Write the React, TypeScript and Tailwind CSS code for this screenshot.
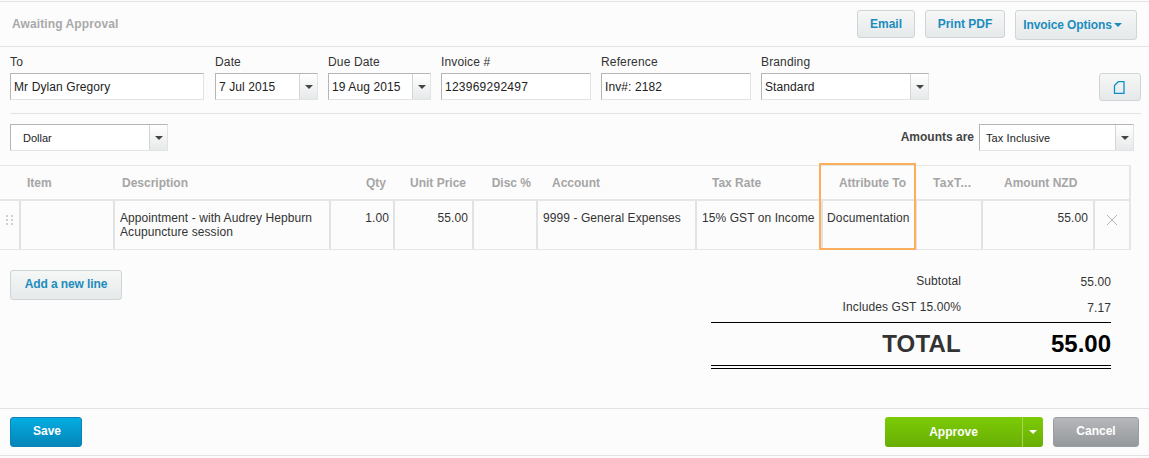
import React from "react";

const FONT = "font-['Liberation_Sans',Arial,sans-serif]";

function Caret({ color = "#444", w = 8, h = 4 }: { color?: string; w?: number; h?: number }) {
  return (
    <svg width={w} height={h} viewBox="0 0 8 4" className="block">
      <path d="M0 0H8L4 4Z" fill={color} />
    </svg>
  );
}

const labelCls = "h-[20px] text-[12px] leading-[18px] text-[#333] tracking-[0.15px]";

function Field({
  label,
  value,
  className,
  track = "tracking-[0.1px]",
}: {
  label: string;
  value: string;
  className: string;
  track?: string;
}) {
  return (
    <div className={"flex flex-col " + className}>
      <div className={labelCls}>{label}</div>
      <div className={"h-[27px] border border-[#e3e3e3] border-t-[#b5b5b5] border-l-[#b5b5b5] bg-white pl-[3px] text-[12px] leading-[26px] text-[#222] whitespace-nowrap " + track}>
        {value}
      </div>
    </div>
  );
}

function Select({
  label,
  value,
  className,
  text = "text-[12px] tracking-[0.1px]",
  pad = "pl-[3px]",
}: {
  label?: string;
  value: string;
  className: string;
  text?: string;
  pad?: string;
}) {
  const box = (
    <div className={"h-[27px] flex border border-[#e3e3e3] border-t-[#b5b5b5] border-l-[#b5b5b5] bg-white " + (label ? "" : className)}>
      <div className={"flex-1 leading-[26px] text-[#222] whitespace-nowrap " + text + " " + pad}>{value}</div>
      <div className="w-[18px] border-l border-[#d5d5d5] bg-gradient-to-b from-[#ffffff] to-[#e6e9ea] flex items-center justify-center">
        <Caret />
      </div>
    </div>
  );
  if (!label) return box;
  return (
    <div className={"flex flex-col " + className}>
      <div className={labelCls}>{label}</div>
      {box}
    </div>
  );
}

const btn =
  "rounded-[3px] border border-[#cfd4d6] bg-gradient-to-b from-[#f6f7f7] to-[#e6e9ea] text-[12px] font-bold text-[#1b8dbd] flex items-center justify-center";

const grid = "grid grid-cols-[19px_94px_216px_64px_79px_64px_159px_126px_94px_66px_112px_38px]";
const head = "text-[12px] font-bold text-[#a5a5a5] leading-[34px] whitespace-nowrap";
const cell = "border-l-2 border-[#e2e2e2] text-[12px] leading-[14px] text-[#333] pt-[10px] tracking-[0.08px] whitespace-nowrap";

export default function App() {
  return (
    <div className={"w-[1149px] h-[458px] overflow-hidden bg-[#fcfcfc] flex flex-col pt-px " + FONT}>
      {/* status bar */}
      <div className="h-[46px] shrink-0 border-y border-[#e4e4e4] flex items-center pl-[12px] pr-[12px]">
        <div className="text-[12px] font-bold text-[#a9a9a9] tracking-[0.1px]">Awaiting Approval</div>
        <div className="ml-auto flex items-start gap-[10px] pt-[8px] self-stretch">
          <div className={btn + " w-[58px] h-[28px]"}>Email</div>
          <div className={btn + " w-[80px] h-[28px]"}>Print PDF</div>
          <div className={btn + " w-[122px] h-[30px] gap-[2px] tracking-[-0.1px] pr-[7px]"}>
            Invoice Options <Caret color="#1b8dbd" w={8} h={4} />
          </div>
        </div>
      </div>

      {/* details */}
      <div className="h-[67px] shrink-0 mx-[10px] mr-[8px] border-b border-[#e2e2e2] pt-[6px] flex items-start">
        <Field label="To" value="Mr Dylan Gregory" className="w-[194px]" />
        <Select label="Date" value="7 Jul 2015" className="w-[103px] ml-[11px]" />
        <Select label="Due Date" value="19 Aug 2015" className="w-[103px] ml-[10px]" />
        <Field label="Invoice #" value="123969292497" className="w-[150px] ml-[10px]" track="tracking-[0.25px]" />
        <Field label="Reference" value="Inv#: 2182" className="w-[150px] ml-[10px]" />
        <Select label="Branding" value="Standard" className="w-[168px] ml-[10px]" />
        <div className={btn + " w-[42px] h-[28px] mt-[20px] ml-auto pr-[2px]"}>
          <svg width="12" height="13" viewBox="0 0 12 13" fill="none" stroke="#0b8fc6" strokeWidth="1.3">
            <path d="M1.5 12.5V4.5L5.5 .5H11V12.5Z" />
          </svg>
        </div>
      </div>

      {/* currency / amounts */}
      <div className="h-[51px] shrink-0 pl-[10px] pr-[15px] pt-[10px] flex items-start justify-between">
        <Select value="Dollar" className="w-[158px]" text="text-[11px]" pad="pl-[12px]" />
        <div className="flex items-start">
          <div className="text-[12px] font-bold leading-[26px] text-[#444] mr-[5px]">Amounts are</div>
          <Select value="Tax Inclusive" className="w-[155px]" text="text-[11px] tracking-[0.1px]" pad="pl-[6px]" />
        </div>
      </div>

      {/* table */}
      <div className="relative w-[1131px] shrink-0 border-y border-r-2 border-[#e6e6e6]">
        <div className={grid + " h-[35px] border-b-2 border-[#e6e6e6]"}>
          <div />
          <div className={head + " pl-[8px]"}>Item</div>
          <div className={head + " pl-[9px]"}>Description</div>
          <div className={head + " text-right pr-[7px]"}>Qty</div>
          <div className={head + " text-right pr-[6px]"}>Unit Price</div>
          <div className={head + " text-right pr-[5px]"}>Disc %</div>
          <div className={head + " pl-[16px]"}>Account</div>
          <div className={head + " pl-[17px]"}>Tax Rate</div>
          <div className={head + " text-right pr-[9px]"}>Attribute To</div>
          <div className={head + " pl-[18px] tracking-[0.4px]"}>TaxT...</div>
          <div className={head + " pl-[23px]"}>Amount NZD</div>
          <div />
        </div>
        <div className={grid + " h-[48px]"}>
          <div className="flex justify-center pt-[14px]">
            <svg width="8" height="11" viewBox="0 0 8 11" fill="#cfcfcf">
              <rect x="0" y="0" width="2" height="2" />
              <rect x="5" y="0" width="2" height="2" />
              <rect x="0" y="4" width="2" height="2" />
              <rect x="5" y="4" width="2" height="2" />
              <rect x="0" y="8" width="2" height="2" />
              <rect x="5" y="8" width="2" height="2" />
            </svg>
          </div>
          <div className={cell} />
          <div className={cell + " pl-[5px]"}>
            Appointment - with Audrey Hepburn
            <br />
            Acupuncture session
          </div>
          <div className={cell + " text-right pr-[4px]"}>1.00</div>
          <div className={cell + " text-right pr-[4px]"}>55.00</div>
          <div className={cell} />
          <div className={cell + " pl-[5px]"}>9999 - General Expenses</div>
          <div className={cell + " pl-[5px]"}>15% GST on Income</div>
          <div className={cell + " pl-[4px] tracking-[0.15px]"}>Documentation</div>
          <div className={cell} />
          <div className={cell + " text-right pr-[5px]"}>55.00</div>
          <div className={cell + " flex justify-center pt-[13px] pr-[3px]"}>
            <svg width="12" height="12" viewBox="0 0 12 12" stroke="#b3b3b3" strokeWidth="1" fill="none">
              <path d="M1 1L11 11M11 1L1 11" />
            </svg>
          </div>
        </div>
        <div className="absolute left-[819px] top-[-3px] w-[97px] h-[87px] border-2 border-[#fbae5c]" />
      </div>

      {/* totals */}
      <div className="h-[159px] shrink-0 flex items-start justify-between pl-[10px] pr-[38px] border-b border-[#e2e2e2]">
        <div className={btn + " w-[112px] h-[30px] mt-[20px] pb-[2px] tracking-[-0.1px]"}>Add a new line</div>
        <div className="w-[400px] pt-[23px]">
          <div className="flex justify-end text-[12px] leading-[16px] text-[#333] tracking-[0.1px] h-[26px]">
            <span className="mr-[110px]">Subtotal</span>
            <span className="w-[40px] text-right pt-px">55.00</span>
          </div>
          <div className="flex justify-end text-[12px] leading-[16px] text-[#333] tracking-[0.1px] h-[23px]">
            <span className="mr-[110px]">Includes GST 15.00%</span>
            <span className="w-[40px] text-right pt-px">7.17</span>
          </div>
          <div className="h-[44px] border-t border-b border-black flex items-center justify-end">
            <span className="text-[24px] font-bold text-[#333] mr-[90px] tracking-[0.2px]">TOTAL</span>
            <span className="text-[24px] font-bold text-black">55.00</span>
          </div>
          <div className="h-[1px] mt-[2px] bg-black" />
        </div>
      </div>

      {/* footer */}
      <div className="h-[47px] shrink-0 border-b border-[#e2e2e2] flex items-center pl-[10px] pr-[10px]">
        <div className="w-[72px] h-[30px] rounded-[3px] border border-[#0a82b3] bg-gradient-to-b from-[#05ade2] to-[#0485b8] text-white text-[12px] font-bold flex items-center justify-center pb-[2px] pl-[2px]">
          Save
        </div>
        <div className="ml-auto w-[158px] h-[30px] rounded-[3px] bg-gradient-to-b from-[#7ccb06] to-[#69ae05] text-white text-[12px] font-bold flex">
          <div className="flex-1 flex items-center justify-center border-r border-[#a6d84f]">Approve</div>
          <div className="w-[20px] flex items-center justify-center">
            <Caret color="#fff" />
          </div>
        </div>
        <div className="ml-[10px] w-[86px] h-[30px] rounded-[3px] border border-[#9a9da1] bg-gradient-to-b from-[#b6b8bb] to-[#95989c] text-white text-[12px] font-bold flex items-center justify-center pb-[2px]">
          Cancel
        </div>
      </div>
    </div>
  );
}
